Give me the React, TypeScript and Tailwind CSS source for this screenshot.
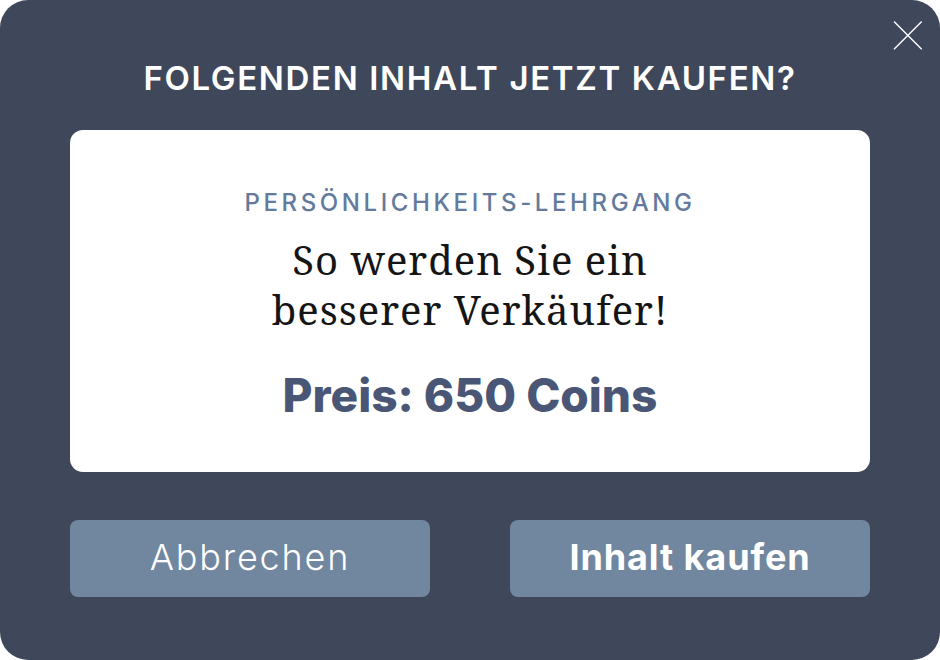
import React from "react";

export default function App() {
  return (
    <div role="dialog" aria-labelledby="dialog-title" className="relative min-h-screen w-full rounded-[28px] bg-[#3f475a] px-[70px] pt-[58px] pb-[63px] font-['Inter',sans-serif]">
      <button aria-label="Schließen" className="absolute top-5 right-4 flex h-8 w-8 items-center justify-center text-white">
        <svg viewBox="0 0 32 32" className="h-8 w-8" fill="none" stroke="currentColor" strokeWidth="1.4">
          <path d="M2 1.5 29.7 29.2M29.7 1.5 2 29.2" />
        </svg>
      </button>
      <h1 id="dialog-title" className="text-center text-[33px] leading-10 font-semibold tracking-wider whitespace-nowrap text-white uppercase">
        Folgenden Inhalt jetzt kaufen?
      </h1>
      <main className="mt-8 flex flex-col items-center rounded-[13px] bg-white pt-[57px] pb-[49px] text-center">
        <p className="text-2xl leading-8 font-medium tracking-[0.15em] text-[#637a9c] uppercase">Persönlichkeits-Lehrgang</p>
        <h2 className="mt-4 font-['Noto_Serif','DejaVu_Serif',serif] text-[40px] leading-[50px] tracking-wide text-[#151515]">
          So werden Sie ein<br />besserer Verkäufer!
        </h2>
        <p className="mt-8 text-[46px] leading-[56px] font-extrabold text-[#4a5675]">Preis: 650 Coins</p>
      </main>
      <div className="mt-12 grid grid-cols-2 gap-20">
        <button className="h-[77px] rounded-lg bg-[#71869f] pb-1 text-4xl font-light tracking-wider text-white">Abbrechen</button>
        <button className="h-[77px] rounded-lg bg-[#71869f] pb-1 text-4xl font-bold tracking-wide text-white">Inhalt kaufen</button>
      </div>
    </div>
  );
}
